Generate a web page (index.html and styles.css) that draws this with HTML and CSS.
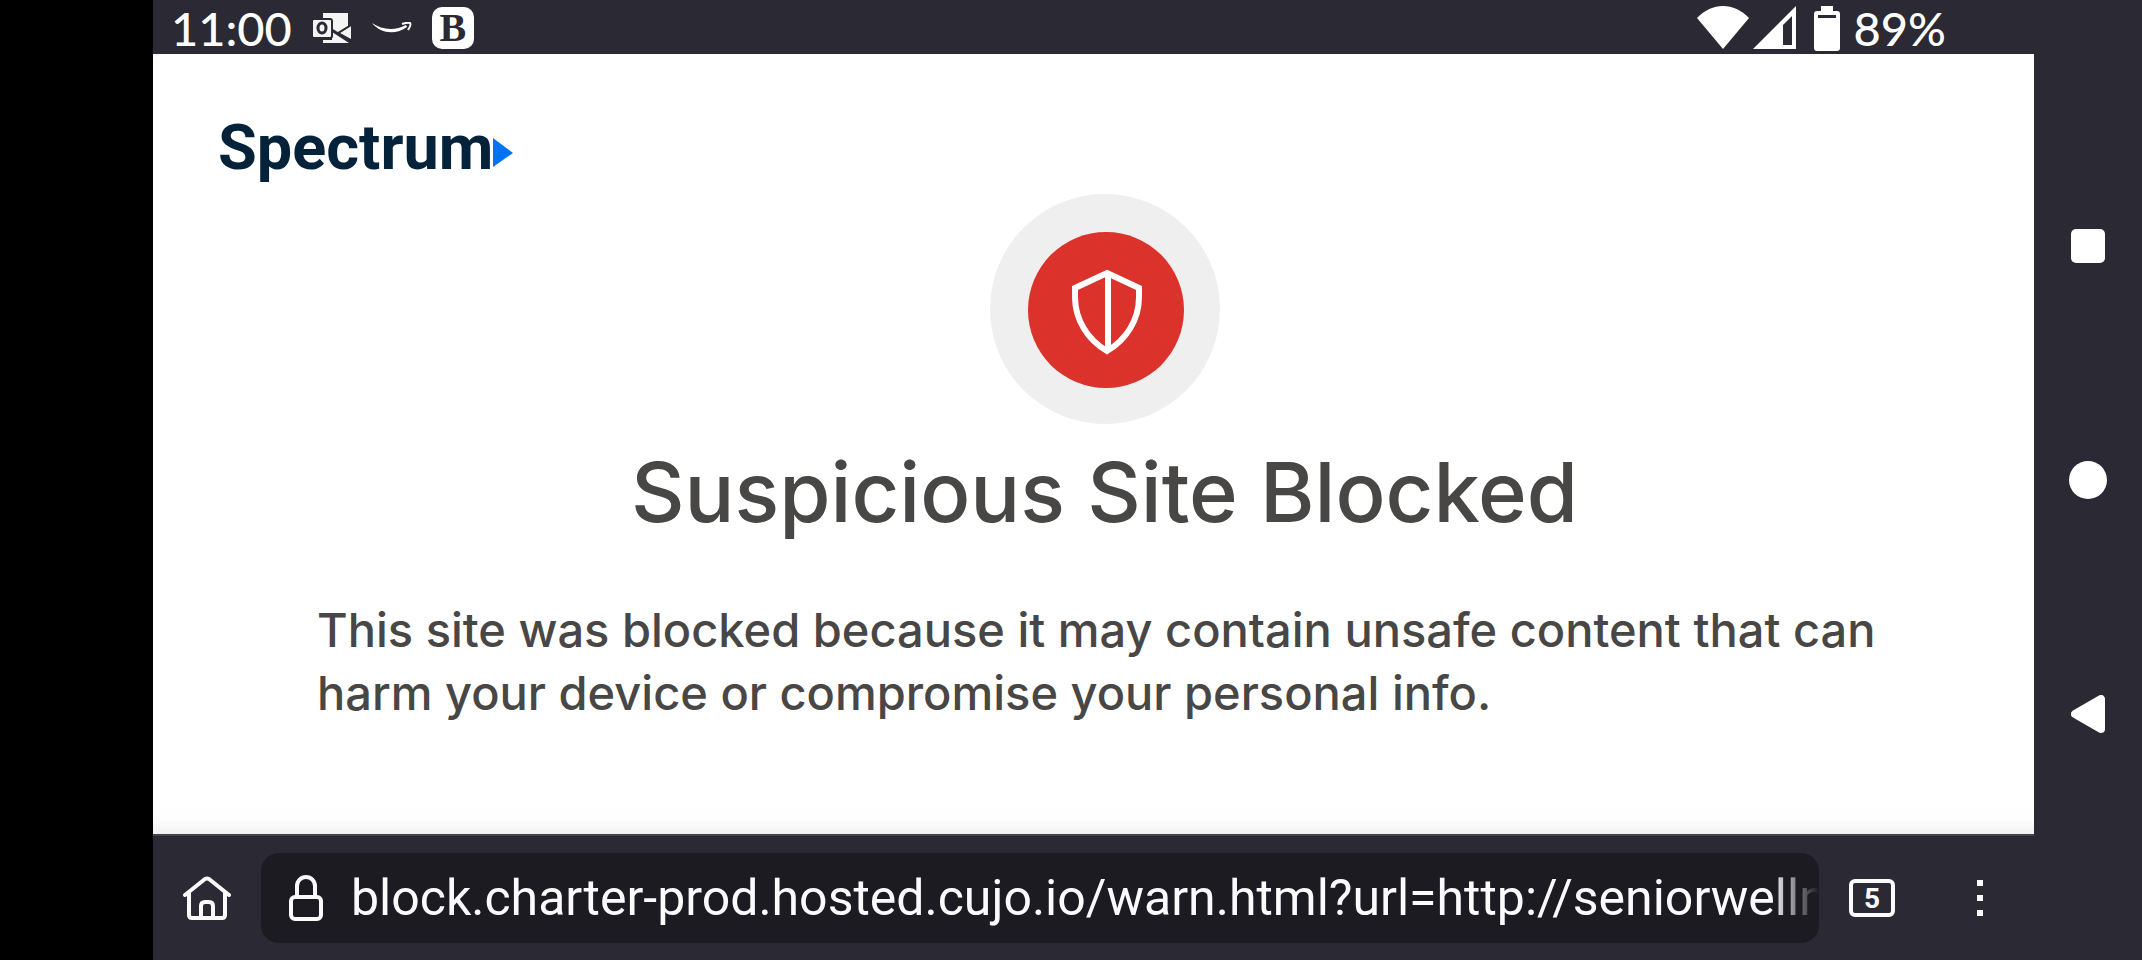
FILE: index.html
```html
<!DOCTYPE html>
<html lang="en">
<head>
  <meta charset="UTF-8">
  <meta name="viewport" content="width=device-width, initial-scale=1.0">
  <title>Suspicious Site Blocked</title>
  <link rel="stylesheet" href="styles.css">
</head>
<body>
  <div class="cutout"></div>

  <div class="screen">
    <!-- Status Bar -->
    <header class="status-bar">
      <div class="status-left">
        <span class="clock">11:00</span>
        <svg class="mail-icon" width="40" height="32" viewBox="0 0 40 32" aria-label="Outlook">
          <path fill="#f4f4f5" d="M11 1h25v14l-10 7-7-6v-6h-8z"/>
          <path fill="#f4f4f5" d="M39 14v13l-11-6z"/>
          <path fill="#f4f4f5" d="M20 20l17 11H11v-3h9z"/>
          <path fill="none" stroke="#2b2933" stroke-width="2" d="M19 17l20 12M26 21l13-8"/>
          <rect x="0" y="7" width="20" height="19" rx="2" fill="#f4f4f5" stroke="#2b2933" stroke-width="2"/>
          <ellipse cx="10" cy="16" rx="4" ry="5" fill="none" stroke="#2b2933" stroke-width="3"/>
        </svg>
        <svg class="smile-icon" width="40" height="12" viewBox="0 0 40 12" aria-label="Amazon">
          <path fill="#fff" d="M0 1c10 7 23 8 34 2l1 2C24 13 9 12 0 1z"/>
          <path fill="none" stroke="#fff" stroke-width="2" d="M30 2c3-1 6-2 8-1 1 1 0 4-2 7"/>
        </svg>
        <span class="b-icon">B</span>
      </div>
      <div class="status-right">
        <svg class="wifi-icon" width="52" height="44" viewBox="0 0 52 44" aria-label="Wi-Fi">
          <path fill="#fff" d="M0 12C15-4 37-4 52 12L26 43z"/>
        </svg>
        <svg class="signal-icon" width="43" height="44" viewBox="0 0 43 44" aria-label="Signal">
          <path fill="#fff" fill-rule="evenodd" d="M43 0v43H0zM39 10l-9 9v20h9z"/>
        </svg>
        <svg class="battery-icon" width="26" height="45" viewBox="0 0 26 45" aria-label="Battery">
          <path fill="#fff" fill-rule="evenodd" d="M7 0h12v5h4a3 3 0 0 1 3 3v34a3 3 0 0 1-3 3H3a3 3 0 0 1-3-3V8a3 3 0 0 1 3-3h4zM4 9v3h18V9z"/>
        </svg>
        <span class="battery-text">89%</span>
      </div>
    </header>

    <!-- Page -->
    <main class="page">
      <div class="logo">
        <span>Spectrum</span>
        <svg width="20" height="29" viewBox="0 0 20 29"><path fill="#0073f0" d="M0 0l20 15L0 29z"/></svg>
      </div>
      <section class="warning">
        <svg class="shield" width="230" height="230" viewBox="0 0 230 230">
          <circle cx="115" cy="115" r="115" fill="#efefef"/>
          <circle cx="116" cy="116" r="78" fill="#dc322c"/>
          <path fill="none" stroke="#fff" stroke-width="6" d="M117 79l32 15v9c0 23-13 43-32 54-19-11-32-31-32-54v-9zM118 79v76"/>
        </svg>
        <h1>Suspicious Site Blocked</h1>
        <p>This site was blocked because it may contain unsafe content that can harm your device or compromise your personal info.</p>
      </section>
    </main>

    <!-- Browser Toolbar -->
    <footer class="toolbar">
      <button class="tool-btn" aria-label="Home">
        <svg width="48" height="44" viewBox="0 0 48 44" fill="none" stroke="#fbfbfe" stroke-width="4" stroke-linecap="round" stroke-linejoin="round">
          <path d="M2 19L22 3q2-1 4 0l20 16M6 17v22q0 3 3 3h30q3 0 3-3V17M18 42V30q0-4 4-4h4q4 0 4 4v12"/>
        </svg>
      </button>
      <div class="address">
        <svg width="34" height="46" viewBox="0 0 34 46" fill="none" stroke="#fbfbfe" stroke-width="4">
          <rect x="2" y="22" width="30" height="22" rx="4"/>
          <path d="M8 22V11a9 9 0 0 1 18 0v11"/>
        </svg>
        <input class="url" type="text" aria-label="Address" value="block.charter-prod.hosted.cujo.io/warn.html?url=http://seniorwelln">
      </div>
      <button class="tabs-btn" aria-label="Tabs">5</button>
      <button class="menu-btn" aria-label="Menu">
        <svg width="6" height="36" viewBox="0 0 6 36" fill="#fbfbfe"><path d="M0 0h6v6H0zM0 15h6v6H0zM0 30h6v6H0z"/></svg>
      </button>
    </footer>
  </div>

  <!-- System Navigation -->
  <nav class="system-nav">
    <button aria-label="Recent apps"><svg width="34" height="34"><rect width="34" height="34" rx="5" fill="#fff"/></svg></button>
    <button aria-label="Home screen"><svg width="38" height="38"><circle cx="19" cy="19" r="19" fill="#fff"/></svg></button>
    <button aria-label="Back"><svg width="34" height="38" viewBox="0 0 34 38"><path fill="#fff" stroke="#fff" stroke-width="8" stroke-linejoin="round" d="M4 19L30 4v30z"/></svg></button>
  </nav>
</body>
</html>
```
FILE: styles.css
```css
/* General Reset */
* {
  margin: 0;
  padding: 0;
  box-sizing: border-box;
}

body {
  display: flex;
  min-height: 100vh;
  background: #2b2933;
  font-family: "Inter", "Liberation Sans", sans-serif;
  color: #fff;
  overflow: hidden;
}

svg {
  display: block;
  flex-shrink: 0;
}

button {
  display: flex;
  align-items: center;
  justify-content: center;
  background: none;
  border: none;
  color: #fbfbfe;
  cursor: pointer;
}

.cutout {
  width: 153px;
  flex-shrink: 0;
  background: #000;
}

.screen {
  flex: 1;
  min-width: 0;
  display: flex;
  flex-direction: column;
}

/* Status Bar */
.status-bar {
  display: flex;
  justify-content: space-between;
  height: 54px;
  padding: 2px 88px 0 18px;
}

.status-left,
.status-right {
  display: flex;
  align-items: center;
}

.clock,
.battery-text {
  font-family: "Lato Medium", "Lato", sans-serif;
  font-size: 47px;
  font-weight: 500;
  line-height: 54px;
}

.clock {
  margin-right: 20px;
}

.smile-icon {
  margin: 0 20px;
}

.b-icon {
  width: 42px;
  height: 42px;
  border-radius: 10px;
  background: #fff;
  color: #2b2933;
  font: bold 40px/42px "Liberation Serif", serif;
  text-align: center;
}

.signal-icon {
  margin: 0 18px 0 4px;
}

.battery-text {
  margin-left: 14px;
}

/* Blocked Page */
.page {
  flex: 1;
  padding: 48px 142px 0 164px;
  background: linear-gradient(0deg, #f2f2f2, #fdfdfd 14px, #fff 30px);
  color: #484745;
}

.logo {
  display: flex;
  align-items: center;
  margin: 0 0 2px -99px;
  height: 90px;
  font-family: "Roboto", sans-serif;
  font-size: 63px;
  font-weight: 700;
  color: #04223a;
}

.logo svg {
  margin-top: 10px;
}

.warning {
  display: flex;
  flex-direction: column;
  align-items: center;
}

.warning h1 {
  margin: 16px 0 54px;
  font-size: 83px;
  font-weight: 550;
  line-height: 104px;
}

.warning p {
  width: 100%;
  font-size: 47px;
  font-weight: 500;
  line-height: 63px;
}

/* Browser Toolbar */
.toolbar {
  display: flex;
  align-items: center;
  height: 126px;
  padding: 0 37px 0 30px;
  border-top: 2px solid #45444b;
}

.address {
  flex: 1;
  min-width: 0;
  display: flex;
  align-items: center;
  height: 90px;
  margin: 0 30px;
  padding-left: 28px;
  border-radius: 18px;
  background: #1c1b21;
}

.url {
  flex: 1;
  min-width: 0;
  margin-left: 28px;
  background: none;
  border: none;
  outline: none;
  color: #fbfbfe;
  font-family: "Roboto", sans-serif;
  font-size: 50px;
  mask-image: linear-gradient(270deg, transparent, #000 48px);
}

.tabs-btn {
  width: 46px;
  height: 38px;
  border: 4px solid #fbfbfe;
  border-radius: 6px;
  font: bold 28px "Roboto", sans-serif;
}

.menu-btn {
  width: 34px;
  height: 60px;
  margin-left: 68px;
}

/* System Navigation */
.system-nav {
  display: flex;
  flex-direction: column;
  align-items: center;
  justify-content: center;
  gap: 126px;
  width: 108px;
  flex-shrink: 0;
}

.system-nav button {
  width: 108px;
  height: 108px;
}
```
